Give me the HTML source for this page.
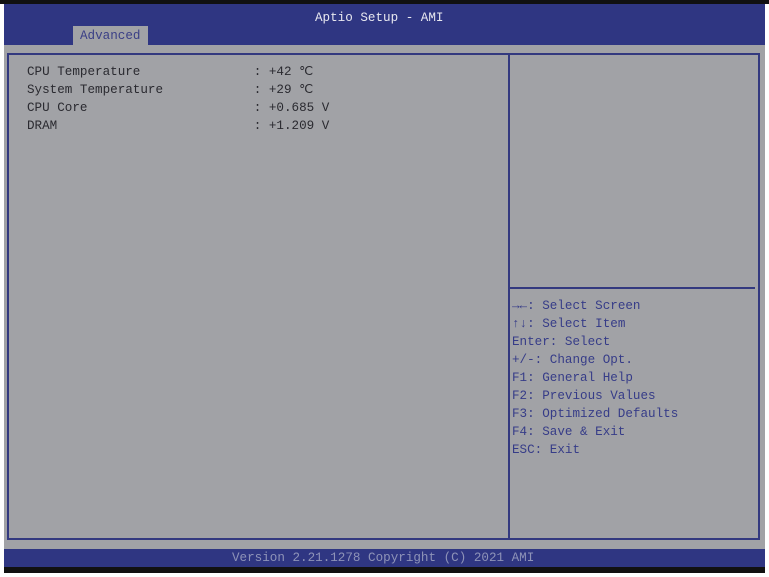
<!DOCTYPE html><html><head><style>
body{margin:0;width:769px;height:577px;background:#fff;position:relative;overflow:hidden;font-family:"Liberation Mono","DejaVu Sans Mono",monospace;font-size:12.6px}
div{position:absolute;box-sizing:border-box}
.t{white-space:pre;line-height:18px}
</style></head><body>
<div style="left:0;top:0;width:769px;height:4px;background:#111"></div>
<div style="left:4px;top:4px;width:761px;height:42px;background:#2f3682"></div>
<div class="t" style="left:315px;top:9px;color:#e8e8f0">Aptio Setup - AMI</div>
<div class="t" style="left:73px;top:26px;width:75px;height:20px;background:#a1a2a6;color:#3a3f86;padding-left:7px;line-height:20px">Advanced</div>
<div style="left:4px;top:45px;width:761px;height:504px;background:#a1a2a6"></div>
<div style="left:7px;top:53px;width:753px;height:487px;border:2px solid #33397f"></div>
<div style="left:508px;top:53px;width:2px;height:487px;background:#33397f"></div>
<div style="left:510px;top:287px;width:245px;height:2px;background:#33397f"></div>
<div class="t" style="left:27px;top:63px;color:#2a2a30">CPU Temperature               : +42 ℃
System Temperature            : +29 ℃
CPU Core                      : +0.685 V
DRAM                          : +1.209 V</div>
<div class="t" style="left:512px;top:297px;color:#363c88"><b>→←</b>: Select Screen
<b>↑↓</b>: Select Item
Enter: Select
+/-: Change Opt.
F1: General Help
F2: Previous Values
F3: Optimized Defaults
F4: Save &amp; Exit
ESC: Exit</div>
<div style="left:4px;top:549px;width:761px;height:18px;background:#2f3682"></div>
<div class="t" style="left:232px;top:549px;color:#8e93b8">Version 2.21.1278 Copyright (C) 2021 AMI</div>
<div style="left:4px;top:567px;width:761px;height:6px;background:#111"></div>
</body></html>
